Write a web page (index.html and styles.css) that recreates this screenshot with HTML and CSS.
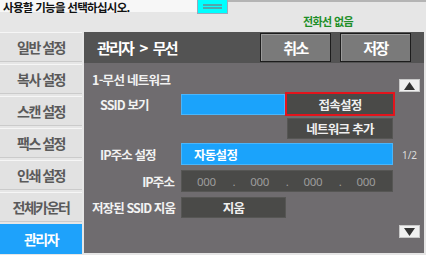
FILE: index.html
```html
<!DOCTYPE html>
<html lang="ko">
<head>
<meta charset="utf-8">
<link rel="stylesheet" href="styles.css">
</head>
<body>
<div class="screen">
  <div class="top">
    <div class="msg">사용할 기능을 선택하십시오.</div>
    <div class="tab"><span></span><span></span></div>
    <div class="status">전화선 없음</div>
  </div>
  <div class="main">
    <nav class="side">
      <div class="nav">일반 설정</div>
      <div class="nav">복사 설정</div>
      <div class="nav">스캔 설정</div>
      <div class="nav">팩스 설정</div>
      <div class="nav">인쇄 설정</div>
      <div class="nav">전체카운터</div>
      <div class="nav active">관리자</div>
    </nav>
    <section class="panel">
      <header class="head">
        <div class="title">관리자 &gt; 무선</div>
        <div class="hbtn">취소</div>
        <div class="hbtn">저장</div>
      </header>
      <div class="content">
        <div class="form">
          <div class="sect">1-무선 네트워크</div>
          <div class="row r-ssid">
            <div class="lbl ind">SSID 보기</div>
            <div class="field blue ssid"></div>
            <div class="btn sel">접속설정</div>
          </div>
          <div class="row r-add">
            <div class="btn add">네트워크 추가</div>
          </div>
          <div class="row r-ipset">
            <div class="lbl ind">IP주소 설정</div>
            <div class="field blue wide">자동설정</div>
          </div>
          <div class="row r-ip">
            <div class="lbl right">IP주소</div>
            <div class="field dark wide ip">
              <span class="oct">000</span><span class="dot">.</span>
              <span class="oct">000</span><span class="dot">.</span>
              <span class="oct">000</span><span class="dot">.</span>
              <span class="oct">000</span>
            </div>
          </div>
          <div class="row r-del">
            <div class="lbl">저장된 SSID 지움</div>
            <div class="btn del">지움</div>
          </div>
        </div>
        <div class="pager">
          <div class="arrow up"><svg width="11" height="8" viewBox="0 0 11 8"><polygon points="5.5,0 11,8 0,8" fill="#333"/></svg></div>
          <div class="page">1/2</div>
          <div class="arrow down"><svg width="11" height="8" viewBox="0 0 11 8"><polygon points="0,0 11,0 5.5,8" fill="#333"/></svg></div>
        </div>
      </div>
    </section>
  </div>
</div>
</body>
</html>
```
FILE: styles.css
```css
* { box-sizing: border-box; }
html, body { margin: 0; padding: 0; }
body {
  width: 426px;
  height: 255px;
  overflow: hidden;
  background: #e6e6e6;
  font-family: "Noto Sans CJK KR", "Noto Sans", sans-serif;
}
.screen { width: 426px; height: 255px; }

.top {
  height: 32px;
  display: flex;
  align-items: flex-start;
  border-top: 2px solid #b4b4b4;
}
.msg {
  width: 197px;
  height: 12px;
  margin-top: -2px;
  padding-left: 3px;
  background: #f7f7f7;
  font-size: 11.5px;
  line-height: 15px;
  letter-spacing: -0.7px;
  font-weight: 700;
  color: #111;
  white-space: nowrap;
  overflow: visible;
}
.tab {
  width: 31px;
  height: 14px;
  margin-top: -2px;
  background: #00ffff;
  border: 1px solid #9ab;
  border-top: none;
  display: flex;
  flex-direction: column;
  align-items: center;
  padding-top: 4px;
  gap: 1px;
}
.tab span { display: block; width: 19px; height: 2px; background: #4fa8ae; }
.status {
  margin-left: 75px;
  margin-top: 13px;
  font-size: 11px;
  line-height: 12px;
  font-weight: 700;
  letter-spacing: -0.6px;
  color: #1e8f28;
}

.main { display: flex; gap: 2px; }
.side { width: 82px; display: flex; flex-direction: column; gap: 2px; }
.nav {
  height: 30px;
  background: #e2e2e2;
  border-top: 1px solid #f6f6f6;
  border-bottom: 1px solid #cbcbcb;
  color: #5a5a5a;
  font-size: 14px;
  font-weight: 700;
  letter-spacing: -1.5px;
  display: flex;
  align-items: center;
  justify-content: center;
}
.nav.active { background: #1ea2fb; color: #fff; border-color: #1ea2fb; }

.panel { width: 340px; height: 221px; background: #6f6c6f; }
.head {
  height: 31px;
  background: #535353;
  display: flex;
  align-items: flex-start;
  padding-right: 13px;
}
.title {
  flex: 1;
  padding-left: 13px;
  color: #fff;
  font-size: 15px;
  line-height: 31px;
  font-weight: 700;
  letter-spacing: -1.8px;
  word-spacing: 4px;
}
.hbtn {
  width: 71px;
  height: 29px;
  margin-top: 1px;
  margin-left: 9px;
  background: #7a7a7a;
  border: 1px solid #1c1c1c;
  box-shadow: inset 1px 1px 0 #9a9a9a;
  color: #fff;
  font-size: 15px;
  font-weight: 700;
  letter-spacing: -1.5px;
  display: flex;
  align-items: center;
  justify-content: center;
}

.content { display: flex; }
.form { width: 311px; }
.sect {
  margin-top: 9px;
  height: 16px;
  line-height: 16px;
  padding-left: 8px;
  color: #f2f2f2;
  font-size: 12.5px;
  font-weight: 700;
  letter-spacing: -0.7px;
}
.row { display: flex; align-items: center; }
.lbl {
  width: 97px;
  padding-left: 8px;
  color: #f2f2f2;
  font-size: 12.5px;
  font-weight: 700;
  letter-spacing: -0.9px;
  white-space: nowrap;
}
.lbl.ind { padding-left: 16px; }
.lbl.right { text-align: right; padding-right: 7px; }

.r-ssid { margin-top: 4px; height: 24px; }
.r-add { margin-top: 2px; height: 21px; padding-left: 203px; }
.r-ipset { margin-top: 4px; height: 22px; }
.r-ip { margin-top: 5px; height: 22px; }
.r-del { margin-top: 5px; height: 21px; }

.field {
  height: 22px;
  color: #fff;
  font-size: 12.5px;
  font-weight: 700;
  letter-spacing: -0.7px;
  display: flex;
  align-items: center;
}
.field.blue { background: #1ba3fb; border: 1px solid #4ab6fb; }
.field.dark { background: #4a4a48; border: 1px solid #565654; }
.field.ssid { width: 104px; height: 21px; }
.field.wide { width: 212px; padding-left: 12px; }
.field.ip { padding-left: 15px; font-family: "Noto Sans", sans-serif; font-weight: 400; color: #9c9c9c; font-size: 11.5px; letter-spacing: -0.3px; }
.oct { width: 36px; }
.dot { width: 18px; }

.btn {
  background: #4a4a48;
  color: #f0f0f0;
  font-size: 12.5px;
  font-weight: 700;
  letter-spacing: -0.7px;
  display: flex;
  align-items: center;
  justify-content: center;
  border: 1px solid #565654;
}
.btn.sel { width: 110px; height: 24px; border: 2px solid #e3141c; }
.btn.add { width: 106px; height: 21px; }
.btn.del { width: 105px; height: 21px; }

.pager { width: 21px; margin-left: 4px; display: flex; flex-direction: column; align-items: center; }
.arrow {
  width: 21px;
  height: 13px;
  background: #f0f0f0;
  border: 1px solid #c8c8c8;
  display: flex;
  align-items: center;
  justify-content: center;
}
.arrow.up { margin-top: 16px; }
.page {
  margin-top: 57px;
  height: 12px;
  line-height: 12px;
  font-family: "Noto Sans", sans-serif;
  font-size: 10px;
  color: #dcdcdc;
  white-space: nowrap;
}
.arrow.down { margin-top: 64px; }
```
